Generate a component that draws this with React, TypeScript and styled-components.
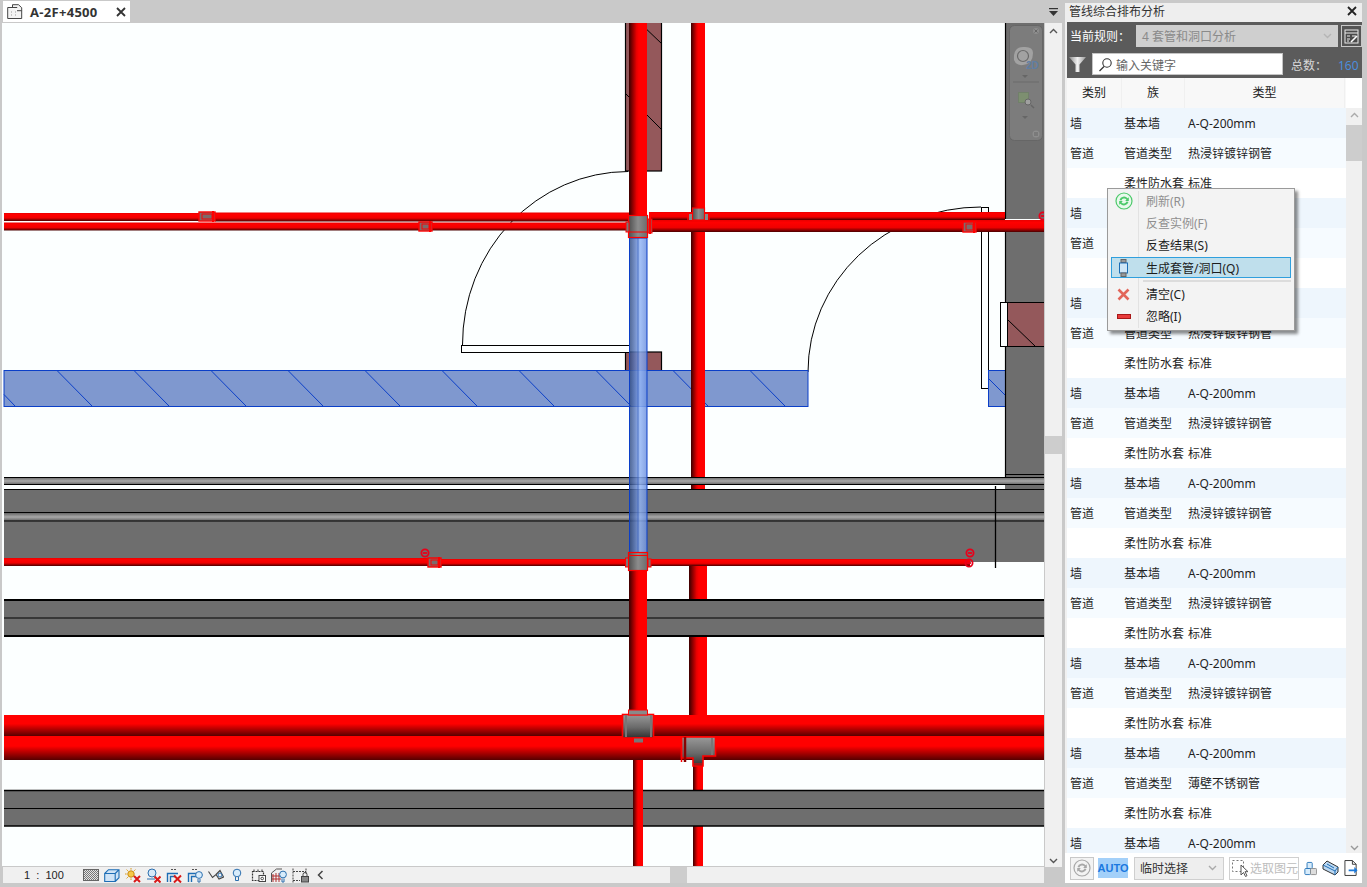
import React from "react";
import styled, { createGlobalStyle } from "styled-components";

const Global = createGlobalStyle`
  html, body { margin: 0; padding: 0; background: #c9c9c9; overflow: hidden; }
  body { font-family: "Noto Sans", "Noto Sans CJK SC", sans-serif; font-size: 12px; color: #1a1a1a; }
  * { box-sizing: border-box; }
`;

const Page = styled.div`
  width: 1367px; height: 887px; background: #c9c9c9;
  display: grid; grid-template-columns: 1062px 297px; column-gap: 3px;
  padding: 0 5px 4px 0; position: relative; overflow: hidden;
`;
const Workspace = styled.div`display: flex; flex-direction: column; height: 883px; padding-left: 2px;`;
const TabBar = styled.div`
  height: 23px; display: flex; justify-content: space-between; align-items: flex-end; padding-left: 1px;
`;
const Tab = styled.div`
  width: 127px; height: 21px; margin-bottom: 1px; background: #fff; display: flex; align-items: center; padding: 0 4px 0 4px; gap: 7px;
  font-family: "Open Sans", "Liberation Sans", sans-serif; font-size: 13px; letter-spacing: .3px; font-weight: 700; color: #333;
`;
const TabLabel = styled.span`flex: 1; white-space: nowrap;`;
const TabMenu = styled.div`width: 17px; height: 22px; display: flex; align-items: center; justify-content: center;`;
const ViewRow = styled.div`flex: 1; display: flex; min-height: 0; overflow: hidden;`;
const CanvasBox = styled.div`width: 1042px; height: 843px; background: #fcffff; position: relative; overflow: hidden;`;
const VScroll = styled.div`
  width: 17px; margin-left: 1px; background: #f0f0f0; display: flex; flex-direction: column; align-items: center;
  justify-content: space-between; padding: 5px 0 3px; position: relative;
`;
const Thumb = styled.div<{ $top: number }>`
  position: absolute; left: 0; right: 0; height: 18px; top: ${p => p.$top}px; background: #cdcdcd;
`;
const StatusBar = styled.div`
  height: 16px; background: #f0f0f0; display: flex; align-items: center; position: relative; margin-right: 18px; margin-left: 1px;
`;
const Scale = styled.span`
  width: 80px; padding-left: 21px; font-family: "Liberation Sans", sans-serif; font-size: 11px; white-space: pre; color: #222;
`;
const StatusIcons = styled.div`display: flex; align-items: center; gap: 5px; width: 228px;`;
const HThumb = styled.div`position: absolute; left: 667px; top: 0; width: 17px; height: 16px; background: #cdcdcd;`;

const Panel = styled.div`display: flex; flex-direction: column; background: #f0f0f0; margin-top: 3px; height: 880px; position: relative;`;
const PanelTitle = styled.div`
  height: 19px; display: flex; align-items: center; justify-content: space-between; padding: 0 5px 3px 4px; background: #eeeeee;
  font-size: 12px; color: #333;
`;
const Toolbar = styled.div`
  margin-left: 2px; height: 56px; background: #5b5b5b; display: flex; flex-direction: column; padding-top: 3px;
`;
const ToolRow = styled.div`display: flex; align-items: center; height: 22px; margin-bottom: 6px;`;
const RuleLabel = styled.span`width: 69px; padding-left: 3px; color: #fff; font-size: 12px; white-space: nowrap;`;
const RuleSelect = styled.div`
  width: 202px; height: 22px; background: #cfcfcf; color: #8a8a8a; display: flex; align-items: center;
  justify-content: space-between; padding: 0 6px 0 6px; font-size: 12px;
`;
const RuleBtn = styled.div`
  width: 21px; height: 22px; margin-left: 3px; background: #555; border: 1px solid #c8c8c8; display: flex; align-items: center; justify-content: center;
`;
const FunnelBox = styled.div`width: 25px; display: flex; justify-content: flex-start; padding-left: 2px;`;
const SearchBox = styled.div`
  width: 191px; height: 22px; background: #fff; border: 1px solid #c4c4c4; display: flex; align-items: center; gap: 3px; padding: 1px 0 0 5px;
  color: #666; font-size: 12px;
`;
const TotalLabel = styled.span`margin-left: 8px; padding-top: 2px; color: #d8d8d8; width: 47px; font-size: 12px; white-space: nowrap;`;
const TotalValue = styled.span`color: #4a90e0; padding-top: 2px; font-size: 12px; font-family: "Open Sans", sans-serif;`;

const TableArea = styled.div`flex: 1; display: flex; min-height: 0; margin-left: 2px; background: #fff; overflow: hidden;`;
const TableCol = styled.div`width: 279px; display: flex; flex-direction: column; overflow: hidden;`;
const HeaderRow = styled.div`
  height: 30px; flex: none; display: grid; grid-template-columns: 55px 63px 160px 1px; align-items: stretch; background: #f8f8f8;
`;
const HeaderCell = styled.div`
  display: flex; align-items: center; justify-content: center; border-right: 1px solid #f0f0f0; color: #222; font-size: 12px; padding-bottom: 2px;
`;
const Row = styled.div<{ $tone: number }>`
  height: 30px; flex: none; display: grid; grid-template-columns: 57px 64px 1fr; align-items: center;
  background: ${p => ["#eef6fd", "#f6fbff", "#ffffff"][p.$tone]}; color: #1f1f1f; font-size: 12px;
`;
const Cell = styled.div<{ $pad?: number }>`padding-left: ${p => p.$pad ?? 0}px; white-space: nowrap;`;
const PanelScroll = styled.div`
  width: 16px; background: #f0f0f0; display: flex; flex-direction: column; align-items: center; justify-content: space-between;
  padding: 4px 0 2px; position: relative; margin-top: 30px;
`;
const PanelThumb = styled.div`position: absolute; top: 17px; left: 0; right: 0; height: 36px; background: #cdcdcd;`;

const Footer = styled.div`
  height: 30px; background: #fff; display: flex; align-items: center; padding-left: 5px;
`;
const RoundBtn = styled.div`
  width: 24px; height: 23px; border: 1px solid #c8c8c8; background: #f3f3f3; display: flex; align-items: center; justify-content: center;
`;
const AutoTag = styled.div`
  width: 30px; height: 20px; margin-left: 4px; background: #a3d0f9; color: #1a78e0; font: 700 11px "Liberation Sans", sans-serif;
  display: flex; align-items: center; justify-content: center;
`;
const ModeSelect = styled.div`
  width: 90px; height: 23px; margin-left: 6px; background: #eeeeee; border: 1px solid #cfcfcf; display: flex; align-items: center;
  justify-content: space-between; padding: 0 6px 0 5px; color: #333; font-size: 12px;
`;
const PickBtn = styled.div`
  width: 70px; height: 23px; margin-left: 5px; background: #fff; border: 1px solid #d0d0d0; display: flex; align-items: center;
  gap: 1px; padding-left: 2px; color: #bdbdbd; font-size: 12px; white-space: nowrap; overflow: hidden;
`;
const FooterIcons = styled.div`display: flex; align-items: center; gap: 5px; margin-left: 5px;`;

const Menu = styled.div`
  position: absolute; left: 1107px; top: 188px; width: 188px; height: 143px; background: #f3f3f3; border: 1px solid #9a9a9a;
  box-shadow: 3px 3px 3px rgba(0,0,0,.45); padding: 1px 3px; display: flex; flex-direction: column; z-index: 5;
`;
const MenuGutter = styled.div`position: absolute; left: 30px; top: 2px; bottom: 2px; width: 1px; background: #e2e2e2;`;
const MenuItem = styled.div<{ $off?: boolean; $hot?: boolean }>`
  height: ${p => (p.$hot ? 21 : 22)}px; margin-top: ${p => (p.$hot ? 1 : 0)}px; flex: none; display: flex; align-items: center; position: relative;
  color: ${p => (p.$off ? "#8f8f8f" : "#1c1c1c")}; font-size: 12px;
  background: ${p => (p.$hot ? "#bfdfec" : "transparent")};
  border: 1px solid ${p => (p.$hot ? "#2f9fdd" : "transparent")}; white-space: nowrap;
`;
const MenuIcon = styled.span`width: 34px; flex: none; display: flex; justify-content: center; padding-right: 11px;`;
const MenuSep = styled.div`height: 2px; flex: none; margin: 2px 0 1px 32px; background: #dcdcdc;`;

const R = "#ff0000";

const Valve = ({ x, y, w = 14, h = 10 }: { x: number; y: number; w?: number; h?: number }) => (
  <g>
    <rect x={x} y={y} width={w} height={h} fill="#7d6a6a" stroke={R} strokeWidth="1.4" />
    <rect x={x + 3} y={y + 2} width={w - 6} height={h - 4} fill="none" stroke={R} strokeWidth="1" />
    <line x1={x + w - 2} y1={y - 1} x2={x + w - 2} y2={y + h + 1} stroke={R} strokeWidth="2" />
  </g>
);
const Target = ({ x, y }: { x: number; y: number }) => (
  <g fill="none" stroke="#e8001a" strokeWidth="1.8">
    <circle cx={x} cy={y} r="3.6" />
    <line x1={x - 2} y1={y} x2={x + 2} y2={y} />
  </g>
);

const hatches = [-20, 57, 134, 211, 288, 365, 442, 519, 596, 673, 750];

const Drawing = () => (
  <svg width="1042" height="843" viewBox="2 23 1042 843" style={{ display: "block" }}>
    <defs>
      <linearGradient id="ph" x1="0" y1="0" x2="0" y2="1">
        <stop offset="0" stopColor="#e80000" /><stop offset=".2" stopColor="#ff0000" />
        <stop offset=".62" stopColor="#f00000" /><stop offset="1" stopColor="#4a0000" />
      </linearGradient>
      <linearGradient id="pbig" x1="0" y1="0" x2="0" y2="1">
        <stop offset="0" stopColor="#ff0000" /><stop offset=".42" stopColor="#ff0000" />
        <stop offset="1" stopColor="#560000" />
      </linearGradient>
      <linearGradient id="pv" x1="0" y1="0" x2="1" y2="0">
        <stop offset="0" stopColor="#3a0000" /><stop offset=".42" stopColor="#e80000" />
        <stop offset=".55" stopColor="#ff0000" /><stop offset="1" stopColor="#ff0000" />
      </linearGradient>
      <linearGradient id="pb" x1="0" y1="0" x2="1" y2="0">
        <stop offset="0" stopColor="#2f4a80" /><stop offset=".45" stopColor="#6f90d8" />
        <stop offset=".6" stopColor="#93b5f5" /><stop offset="1" stopColor="#6d90de" />
      </linearGradient>
      <linearGradient id="gs" x1="0" y1="0" x2="0" y2="1">
        <stop offset="0" stopColor="#666" /><stop offset=".5" stopColor="#a8a8a8" /><stop offset="1" stopColor="#5e5e5e" />
      </linearGradient>
      <linearGradient id="tv" x1="0" y1="0" x2="0" y2="1">
        <stop offset="0" stopColor="#999" /><stop offset=".55" stopColor="#6a6a6a" /><stop offset="1" stopColor="#303030" />
      </linearGradient>
      <linearGradient id="th" x1="0" y1="0" x2="1" y2="0">
        <stop offset="0" stopColor="#4e4e4e" /><stop offset=".5" stopColor="#8c8c8c" /><stop offset="1" stopColor="#6c6c6c" />
      </linearGradient>
    </defs>

    {/* walls */}
    <g stroke="#000" strokeWidth="1.2" fill="#94585b">
      <rect x="625.5" y="20" width="36" height="151" />
      <rect x="625.5" y="352" width="36" height="20" />
    </g>
    <g stroke="#000" strokeWidth="1" fill="none">
      <line x1="640" y1="23" x2="662" y2="44" />
      <line x1="626" y1="94" x2="662" y2="130" />
    </g>

    {/* door arcs */}
    <g fill="none" stroke="#000" strokeWidth="1">
      <path d="M462.5 345 A166 173 0 0 1 628 171.5" />
      <rect x="461.5" y="345.5" width="168" height="7" fill="#fcffff" />
      <path d="M808 372 A173 165 0 0 1 981 207" />
    </g>

    {/* blue wall */}
    <rect x="4" y="370.5" width="804" height="36" fill="#7f98cf" stroke="#0b3fc8" strokeWidth="1" />
    <g stroke="#0b3fc8" strokeWidth="1">
      {hatches.map(x => (
        <line key={x} x1={Math.max(x, 4)} y1={x < 4 ? 370.5 + (4 - x) : 370.5} x2={Math.min(x + 35, 807)} y2={x + 35 > 807 ? 370.5 + (807 - x) : 406} />
      ))}
    </g>

    {/* second vertical, under the ducts */}
    <rect x="691" y="23" width="14" height="467" fill="url(#pv)" />
    <rect x="689" y="565" width="18" height="150" fill="url(#pv)" />
    <rect x="693" y="755" width="10" height="111" fill="url(#pv)" />

    {/* right wall and door frame */}
    <rect x="981.5" y="207.5" width="7" height="181" fill="#fcffff" stroke="#000" strokeWidth="1" />
    <rect x="988.5" y="370.5" width="17" height="36" fill="#7f98cf" stroke="#0b3fc8" strokeWidth="1" />
    <line x1="989" y1="379" x2="1005" y2="395" stroke="#0b3fc8" strokeWidth="1" />
    <rect x="1005" y="20" width="40" height="458" fill="#6e6e6e" />
    <line x1="1005.5" y1="23" x2="1005.5" y2="478" stroke="#000" strokeWidth="1.2" />
    <rect x="1000.5" y="302.5" width="7" height="44" fill="#fcffff" stroke="#000" strokeWidth="1" />
    <rect x="1007.5" y="302.5" width="37" height="44" fill="#94585b" stroke="#000" strokeWidth="1" />
    <line x1="1008" y1="320" x2="1035" y2="346" stroke="#000" strokeWidth="1" />
    <line x1="1005" y1="474.5" x2="1045" y2="474.5" stroke="#000" strokeWidth="1" />

    {/* ducts */}
    <rect x="4" y="477" width="1041" height="8" fill="url(#gs)" />
    <g stroke="#000" strokeWidth="1.2">
      <line x1="4" y1="477.5" x2="1045" y2="477.5" />
      <line x1="4" y1="484.5" x2="1045" y2="484.5" />
    </g>
    <rect x="1005" y="485" width="40" height="5" fill="#6e6e6e" />
    <rect x="4" y="489" width="1041" height="73" fill="#6e6e6e" />
    <rect x="4" y="513" width="1041" height="8" fill="url(#gs)" />
    <g stroke="#000" strokeWidth="1.1">
      <line x1="4" y1="489.5" x2="1045" y2="489.5" />
      <line x1="4" y1="512.5" x2="1045" y2="512.5" />
      <line x1="4" y1="521" x2="1045" y2="521" />
    </g>
    <line x1="995.5" y1="486" x2="995.5" y2="568" stroke="#000" strokeWidth="1.3" />

    <rect x="4" y="599" width="1041" height="37" fill="#6e6e6e" />
    <g stroke="#000">
      <line x1="4" y1="600" x2="1045" y2="600" strokeWidth="2" />
      <line x1="4" y1="618" x2="1045" y2="618" strokeWidth="1" />
      <line x1="4" y1="636" x2="1045" y2="636" strokeWidth="2" />
    </g>
    <rect x="4" y="790" width="1041" height="36" fill="#6e6e6e" />
    <g stroke="#000">
      <line x1="4" y1="790.5" x2="1045" y2="790.5" strokeWidth="1.6" />
      <line x1="4" y1="808.5" x2="1045" y2="808.5" strokeWidth="1" />
      <line x1="4" y1="826" x2="1045" y2="826" strokeWidth="1.6" />
    </g>

    {/* horizontal pipes */}
    <rect x="4" y="213" width="626" height="8" fill="url(#ph)" />
    <rect x="4" y="222.5" width="626" height="8" fill="url(#ph)" />
    <rect x="215" y="212.5" width="415" height="9" fill="url(#ph)" />
    <rect x="650" y="212" width="355" height="8" fill="url(#ph)" />
    <rect x="648" y="220" width="397" height="12" fill="url(#ph)" />
    <line x1="1005" y1="219.5" x2="1045" y2="219.5" stroke="#fcffff" strokeWidth="1" />
    <rect x="4" y="558" width="426" height="8" fill="url(#ph)" />
    <rect x="650" y="559" width="320" height="7" fill="url(#ph)" />
    <rect x="440" y="559" width="190" height="7" fill="url(#ph)" />

    {/* first vertical */}
    <rect x="629" y="23" width="18" height="215" fill="url(#pv)" />
    <rect x="629" y="570" width="18" height="145" fill="url(#pv)" />
    <rect x="633" y="740" width="10" height="126" fill="url(#pv)" />
    <rect x="629.5" y="238" width="17.5" height="316" fill="url(#pb)" fillOpacity=".84" stroke="#0b3fc8" strokeWidth="1" />
    <line x1="638" y1="238" x2="638" y2="554" stroke="#2a55b8" strokeWidth=".6" />

    {/* big pipes */}
    <rect x="4" y="736" width="1041" height="24" fill="url(#pbig)" />
    <rect x="4" y="715" width="1041" height="21" fill="url(#pbig)" />

    {/* tees */}
    <g stroke={R}>
      <rect x="628.5" y="215.5" width="19" height="22" fill="url(#th)" strokeWidth="1.2" />
      <rect x="648" y="219" width="4" height="14" fill="#777" strokeWidth="1" />
      <line x1="650" y1="212" x2="650" y2="234" strokeWidth="2" />
      <rect x="626" y="222" width="3" height="10" fill="#777" strokeWidth="1" />
      <line x1="628" y1="232" x2="648" y2="232" strokeWidth="1" />
      <rect x="692.5" y="208" width="12" height="12" fill="url(#th)" strokeWidth="1.2" />
      <line x1="688" y1="212" x2="688" y2="220" strokeWidth="1.5" />
      <line x1="709" y1="213" x2="709" y2="220" strokeWidth="1.5" />
      <rect x="689" y="214" width="3" height="6" fill="#888" stroke="none" />
      <rect x="705" y="214" width="3" height="6" fill="#888" stroke="none" />

      <rect x="628.5" y="552.5" width="19" height="18" fill="url(#th)" strokeWidth="1.2" />
      <line x1="628.5" y1="555.5" x2="647.5" y2="555.5" strokeWidth="1" />
      <rect x="625.5" y="558" width="3" height="9" fill="#777" strokeWidth="1" />
      <rect x="648" y="559" width="3" height="8" fill="#777" strokeWidth="1" />

      <rect x="622.5" y="714.5" width="31" height="23.500" fill="url(#tv)" strokeWidth="1.6" />
      <line x1="626" y1="715" x2="626" y2="737" stroke="#777" strokeWidth="2" />
      <line x1="651" y1="715" x2="651" y2="737" stroke="#777" strokeWidth="2" />
      <rect x="628.5" y="710" width="19" height="5" fill="#8a8a8a" strokeWidth="1" />
      <rect x="633.5" y="738" width="10" height="5" fill="#777" strokeWidth="1" />

      <path d="M681.5 737 H715.500 V756 H703 V766 H693 V758 H681.5 Z" fill="url(#tv)" strokeWidth="1.6" />
      <line x1="685" y1="737" x2="685" y2="762" strokeWidth="2.500" stroke="#8a0000" />
      <line x1="681.5" y1="737" x2="681.5" y2="762" strokeWidth="1.500" />
      <line x1="712" y1="738" x2="712" y2="755" stroke="#777" strokeWidth="2" />
      <line x1="693" y1="764" x2="703" y2="764" strokeWidth="1" />
    </g>

    <Valve x={199} y={212} w={16} h={9} />
    <Valve x={419} y={222} w={13} h={9} />
    <Valve x={963} y={222} w={13} h={10} />
    <Valve x={428} y={558} w={13} h={9} />
    <Target x={425} y={553} />
    <Target x={970} y={553} />
    <Target x={969} y={563} />
    <Target x={1043} y={216} />

    {/* navigation bar overlay */}
    <rect x="1009.5" y="25.5" width="33" height="115" rx="5" fill="#7c7c7c" stroke="#666" />
    <circle cx="1036" cy="31" r="3" fill="#8e8e8e" />
    <path d="M1034.5 29.5l3 3m0-3l-3 3" stroke="#666" />
    <path d="M1014 60 Q1013 47 1023 47 Q1033 46 1033 53 Q1033 64 1023 65 Q1016 66 1014 60Z" fill="#a2a2a2" />
    <circle cx="1023" cy="56" r="5.500" fill="none" stroke="#6a6a6a" strokeWidth="1.2" />
    <text x="1026" y="69" fontFamily="Liberation Sans, sans-serif" fontSize="10" fontWeight="700" fill="#5f7ea3">2D</text>
    <path d="M1022 75h6l-3 3z" fill="#666" />
    <line x1="1013" y1="82" x2="1039" y2="82" stroke="#6a6a6a" />
    <rect x="1018.5" y="92.5" width="10" height="10" fill="#7d8f70" stroke="#71806a" />
    <circle cx="1028" cy="102" r="3" fill="#a0a0a0" stroke="#666" />
    <path d="M1031 105l3 3" stroke="#666" strokeWidth="1.5" />
    <path d="M1022 116h6l-3 3z" fill="#666" />
    <circle cx="1036" cy="134" r="3.5" fill="#8e8e8e" />
    <path d="M1034 133h4m-4 2h4" stroke="#666" />
  </svg>
);

const Ic = styled.svg`display: block; flex: none;`;
const Chevron = ({ up, color = "#555" }: { up?: boolean; color?: string }) => (
  <Ic width="9" height="6" viewBox="0 0 9 6">
    <path d={up ? "M1 5l3.5-3.5L8 5" : "M1 1l3.5 3.5L8 1"} fill="none" stroke={color} strokeWidth="1.4" />
  </Ic>
);
const CloseX = ({ color = "#333" }: { color?: string }) => (
  <Ic width="10" height="10" viewBox="0 0 10 10"><path d="M1 1l8 8M9 1l-8 8" stroke={color} strokeWidth="1.8" /></Ic>
);
const RefreshGlyph = ({ c, bg }: { c: string; bg: string }) => (
  <Ic width="18" height="18" viewBox="0 0 18 18">
    <circle cx="9" cy="9" r="8" fill={bg} stroke={c} strokeWidth="1.2" />
    <path d="M4.5 8 A4.7 4.7 0 0 1 12.6 6.3 L13.8 5.2 V9 H10.2 L11.5 7.6 A3 3 0 0 0 6.4 8.4 Z M13.5 10 A4.7 4.7 0 0 1 5.4 11.7 L4.2 12.8 V9 H7.8 L6.5 10.4 A3 3 0 0 0 11.6 9.6 Z" fill={c} />
  </Ic>
);

const statusIcons = [
  <Ic key="a" width="16" height="12" viewBox="0 0 16 12">
    <defs><pattern id="ck" width="2" height="2" patternUnits="userSpaceOnUse"><rect width="2" height="2" fill="#e4e4e4" /><rect width="1" height="1" fill="#777" /><rect x="1" y="1" width="1" height="1" fill="#777" /></pattern></defs>
    <rect x=".5" y=".5" width="15" height="11" fill="url(#ck)" stroke="#666" />
  </Ic>,
  <Ic key="b" width="16" height="13" viewBox="0 0 16 13">
    <path d="M.7 4.5h10.5v8H.7zM.7 4.5L4.5.7H15v8l-3.8 3.8M11.2 4.5L15 .7" fill="#cfe3f6" stroke="#1c6db5" strokeWidth="1.1" />
  </Ic>,
  <Ic key="c" width="16" height="15" viewBox="0 0 16 15">
    <circle cx="6" cy="6" r="3.2" fill="#f6c848" stroke="#c98a12" />
    <path d="M6 0v1.6M0 6h1.6M1.6 1.6l1.2 1.2M10.4 1.6L9.2 2.8M1.6 10.4l1.2-1.2M6 10.4V12" stroke="#d89a1c" />
    <path d="M9 8l6 6m0-6l-6 6" stroke="#d81818" strokeWidth="2" />
  </Ic>,
  <Ic key="d" width="15" height="15" viewBox="0 0 15 15">
    <circle cx="6" cy="5" r="4" fill="#d6e8f8" stroke="#2c6fae" />
    <path d="M1 11h8" stroke="#2c6fae" /><path d="M8.5 8.5l6 6m0-6l-6 6" stroke="#d81818" strokeWidth="2" />
  </Ic>,
  <Ic key="e" width="16" height="15" viewBox="0 0 16 15">
    <path d="M1.500 14V5.500H12M4.500 14V8.500H10" fill="none" stroke="#1c6db5" strokeWidth="1.4" />
    <path d="M5 1.500h6" stroke="#555" strokeDasharray="2 1" />
    <path d="M8 7.500l7 7m0-7l-7 7" stroke="#d81818" strokeWidth="2" />
  </Ic>,
  <Ic key="f" width="16" height="15" viewBox="0 0 16 15">
    <path d="M1.500 14V5.500H11M4.500 14V8.500H9" fill="none" stroke="#1c6db5" strokeWidth="1.4" />
    <path d="M5 1.500h6" stroke="#555" strokeDasharray="2 1" />
    <circle cx="12" cy="7" r="3.400" fill="#d8ecfb" stroke="#2c6fae" />
    <path d="M11 11v3h2v-3" fill="none" stroke="#2c6fae" />
  </Ic>,
  <Ic key="g" width="16" height="12" viewBox="0 0 16 12">
    <path d="M.5 2.500l4 6 3.500-3 3 4.500 4.500-2-3.500-6.500-4 4" fill="none" stroke="#444" strokeWidth="1.1" />
    <circle cx="12" cy="6" r="2" fill="none" stroke="#2c6fae" />
  </Ic>,
  <Ic key="h" width="10" height="14" viewBox="0 0 10 14" style={{ margin: "0 4px 0 3px" }}>
    <circle cx="5" cy="5" r="3.800" fill="#d8ecfb" stroke="#2c6fae" />
    <path d="M3.500 9v3.500h3V9" fill="none" stroke="#2c6fae" />
  </Ic>,
  <Ic key="i" width="15" height="13" viewBox="0 0 15 13">
    <rect x="1.500" y="2.500" width="11" height="9" fill="none" stroke="#333" strokeDasharray="2 1" strokeWidth="1.200" />
    <path d="M3 .500v2M7 .500v2M11 .500v2" stroke="#333" />
    <rect x="8" y="6.500" width="6.500" height="6" fill="#fff" stroke="#444" /><circle cx="11.200" cy="9.500" r="1.300" fill="none" stroke="#444" />
  </Ic>,
  <Ic key="j" width="16" height="15" viewBox="0 0 16 15">
    <path d="M.5 14V5L5.500 1H11" fill="none" stroke="#555" />
    <path d="M2 6v8M5 5v9M8 5v9M1 8h9M1 11h9" stroke="#b03030" strokeWidth="1" />
    <circle cx="12" cy="6.500" r="3.400" fill="#d8ecfb" stroke="#2c6fae" />
    <path d="M11 10.500v3.500h2v-3.500" fill="none" stroke="#2c6fae" />
  </Ic>,
  <Ic key="k" width="17" height="15" viewBox="0 0 17 15">
    <path d="M1 .5v14M14 .5v5M1 3.500h13M1 12.500h7" stroke="#444" strokeDasharray="2 1" />
    <rect x="9.500" y="8.500" width="7" height="5.500" fill="#888" stroke="#444" />
    <path d="M11 8.500V6.500a2 2 0 0 1 4 0v2" fill="none" stroke="#444" />
  </Ic>,
];

const rows: [string, string, string][] = [];
for (let i = 0; i < 9; i++) {
  rows.push(["墙", "基本墙", "A-Q-200mm"]);
  if (i < 8) {
    rows.push(["管道", "管道类型", i === 7 ? "薄壁不锈钢管" : "热浸锌镀锌钢管"]);
    rows.push(["", "柔性防水套", "标准"]);
  }
}

export default function App() {
  return (
    <>
      <Global />
      <Page>
        <Workspace>
          <TabBar>
            <Tab>
              <Ic width="16" height="15" viewBox="0 0 16 15">
                <path d="M.7 3.500h9.500M.7 3.500v11h14V6.500M5.500 3.500V.7h6l3.200 3v3H10" fill="#f3f3f3" stroke="#444" />
                <path d="M4 8h1M4 11h1M8 8h1M8 11h1" stroke="#999" />
              </Ic>
              <TabLabel>A-2F+4500</TabLabel>
              <CloseX />
            </Tab>
            <TabMenu>
              <Ic width="9" height="8" viewBox="0 0 9 8"><path d="M0 .6h9" stroke="#333" strokeWidth="1.2" /><path d="M0 3h9L4.500 8z" fill="#333" /></Ic>
            </TabMenu>
          </TabBar>
          <ViewRow>
            <CanvasBox><Drawing /></CanvasBox>
            <VScroll>
              <Chevron up />
              <Thumb $top={413} />
              <Chevron />
            </VScroll>
          </ViewRow>
          <StatusBar>
            <Scale>1  :  100</Scale>
            <StatusIcons>{statusIcons}</StatusIcons>
            <Ic width="7" height="10" viewBox="0 0 7 10" style={{ marginLeft: 6 }}><path d="M5.500 1L1.500 5l4 4" fill="none" stroke="#444" strokeWidth="1.500" /></Ic>
            <HThumb />
          </StatusBar>
        </Workspace>

        <Panel>
          <PanelTitle>
            <span>管线综合排布分析</span>
            <CloseX color="#222" />
          </PanelTitle>
          <Toolbar>
            <ToolRow>
              <RuleLabel>当前规则：</RuleLabel>
              <RuleSelect>
                <span>4 套管和洞口分析</span>
                <Chevron color="#b5b5b5" />
              </RuleSelect>
              <RuleBtn>
                <Ic width="15" height="15" viewBox="0 0 15 15">
                  <rect x="1" y="1" width="13" height="13" fill="#4a4a4a" stroke="#eee" />
                  <path d="M1 4h13M3 7h3M8 7h4M3 10h3M3 12h2" stroke="#eee" />
                  <path d="M7 13l6-6" stroke="#fff" strokeWidth="1.600" />
                </Ic>
              </RuleBtn>
            </ToolRow>
            <ToolRow>
              <FunnelBox>
                <Ic width="17" height="16" viewBox="0 0 17 16">
                  <defs><linearGradient id="fn" x1="0" y1="0" x2="1" y2="0"><stop offset="0" stopColor="#8a8a8a" /><stop offset=".5" stopColor="#f2f2f2" /><stop offset="1" stopColor="#9a9a9a" /></linearGradient></defs>
                  <path d="M0 1h17L10.500 8.500V16H6.500V8.500z" fill="url(#fn)" />
                </Ic>
              </FunnelBox>
              <SearchBox>
                <Ic width="15" height="15" viewBox="0 0 15 15">
                  <circle cx="9" cy="6" r="4.200" fill="none" stroke="#333" strokeWidth="1.100" />
                  <path d="M6 9.500L1.500 14" stroke="#333" strokeWidth="1.300" />
                </Ic>
                输入关键字
              </SearchBox>
              <TotalLabel>总数：</TotalLabel>
              <TotalValue>160</TotalValue>
            </ToolRow>
          </Toolbar>
          <TableArea>
            <TableCol>
              <HeaderRow>
                <HeaderCell>类别</HeaderCell>
                <HeaderCell>族</HeaderCell>
                <HeaderCell>类型</HeaderCell>
              </HeaderRow>
              {rows.map((r, i) => (
                <Row key={i} $tone={i % 3}>
                  <Cell $pad={3}>{r[0]}</Cell>
                  <Cell>{r[1]}</Cell>
                  <Cell>{r[2]}</Cell>
                </Row>
              ))}
            </TableCol>
            <PanelScroll>
              <Chevron up color="#aaa" />
              <PanelThumb />
              <Chevron color="#999" />
            </PanelScroll>
          </TableArea>
          <Footer>
            <RoundBtn><RefreshGlyph c="#a8a8a8" bg="#f3f3f3" /></RoundBtn>
            <AutoTag>AUTO</AutoTag>
            <ModeSelect>
              <span>临时选择</span>
              <Chevron color="#aaa" />
            </ModeSelect>
            <PickBtn>
              <Ic width="17" height="18" viewBox="0 0 17 18">
                <rect x=".5" y="1.500" width="11" height="11" fill="none" stroke="#777" strokeDasharray="2 2" />
                <path d="M9 6l0 10 2.500-2.500 2 4 1.500-.8-2-4H16z" fill="#fff" stroke="#555" />
              </Ic>
              选取图元
            </PickBtn>
            <FooterIcons>
              <Ic width="13" height="15" viewBox="0 0 15 16">
                <rect x="3.500" y="1" width="6" height="7" rx="1" fill="#d8ecfb" stroke="#1c6db5" />
                <rect x="1" y="8" width="6.500" height="7" rx="1" fill="#d8ecfb" stroke="#1c6db5" />
                <rect x="7.500" y="8" width="7" height="7" rx="1" fill="#ddd" stroke="#888" />
              </Ic>
              <Ic width="17" height="16" viewBox="0 0 17 16">
                <path d="M1 5l4-4 11 6v5l-3 3L1 9z" fill="#bcd8f2" stroke="#333" />
                <path d="M1 5l12 6v4M13 11l3-4M5 4l7 4" fill="none" stroke="#1c6db5" />
              </Ic>
              <Ic width="14" height="16" viewBox="0 0 15 17">
                <path d="M1 .5h8l4 4v12H1z" fill="#fff" stroke="#333" />
                <path d="M9 .5v4h4" fill="none" stroke="#333" />
                <path d="M5 10h6V7.500l3.500 3.500L11 14.500V12H5z" fill="#1c78d8" />
              </Ic>
            </FooterIcons>
          </Footer>
        </Panel>

        <Menu>
          <MenuGutter />
          <MenuItem $off>
            <MenuIcon><RefreshGlyph c="#4cc96a" bg="#e9f9ed" /></MenuIcon>刷新(R)
          </MenuItem>
          <MenuItem $off><MenuIcon />反查实例(F)</MenuItem>
          <MenuItem><MenuIcon />反查结果(S)</MenuItem>
          <MenuItem $hot>
            <MenuIcon>
              <Ic width="11" height="18" viewBox="0 0 11 18">
                <rect x="3" y=".5" width="5" height="3" fill="#999" stroke="#666" />
                <rect x="1.500" y="4" width="8" height="10" fill="#cfe6f6" stroke="#1c6db5" />
                <rect x="3" y="14" width="5" height="3.500" fill="#999" stroke="#666" />
              </Ic>
            </MenuIcon>
            生成套管/洞口(Q)
          </MenuItem>
          <MenuSep />
          <MenuItem>
            <MenuIcon>
              <Ic width="13" height="13" viewBox="0 0 13 13"><path d="M1.500 1.500l10 10m0-10l-10 10" stroke="#e2665a" strokeWidth="2.600" /></Ic>
            </MenuIcon>
            清空(C)
          </MenuItem>
          <MenuItem>
            <MenuIcon>
              <Ic width="14" height="5" viewBox="0 0 14 5"><rect x=".5" y=".5" width="13" height="4" fill="#e83b3b" stroke="#a81818" /></Ic>
            </MenuIcon>
            忽略(I)
          </MenuItem>
        </Menu>
      </Page>
    </>
  );
}
